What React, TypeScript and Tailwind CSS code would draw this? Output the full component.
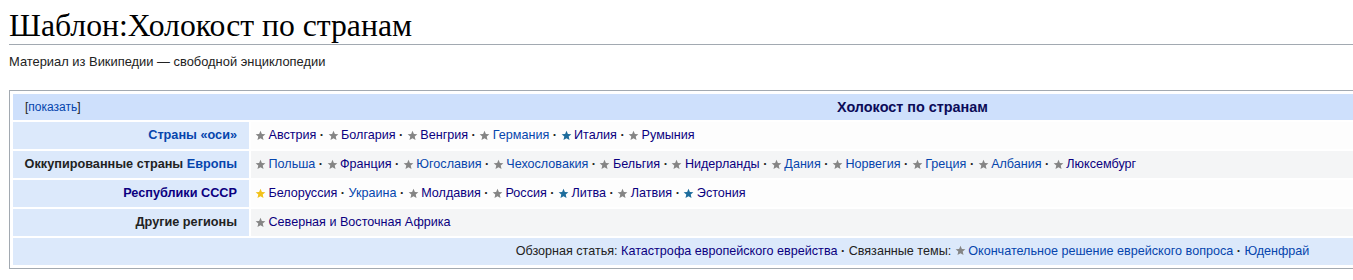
import React from 'react';

type StarKind = 'gray' | 'blue' | 'yellow' | null;

interface Item {
  text: string;
  star: StarKind;
  visited: boolean;
}

const starColor: Record<string, string> = {
  gray: '#858585',
  blue: '#1d6c9c',
  yellow: '#f2c21b',
};

const Star: React.FC<{ kind: string }> = ({ kind }) => (
  <svg className="inline-block w-[11px] h-[11px] align-[-1px] mr-[2.5px]" viewBox="0 0 24 24">
    <path
      fill={starColor[kind]}
      d="M12 1.5l3 7.2 7.6.6-5.8 5 1.8 7.5L12 17.8l-6.6 4 1.8-7.5-5.8-5 7.6-.6z"
    />
  </svg>
);

const Link: React.FC<{ visited?: boolean; children: React.ReactNode }> = ({ visited, children }) => (
  <a className={visited ? 'text-[#0b0080]' : 'text-[#0645ad]'}>{children}</a>
);

const Dot = () => <b className="font-bold"> · </b>;

const rows: { group: React.ReactNode; items: Item[]; bg: string }[] = [
  {
    group: <Link>Страны «оси»</Link>,
    bg: 'bg-[#fdfdfd]',
    items: [
      { text: 'Австрия', star: 'gray', visited: true },
      { text: 'Болгария', star: 'gray', visited: true },
      { text: 'Венгрия', star: 'gray', visited: true },
      { text: 'Германия', star: 'gray', visited: false },
      { text: 'Италия', star: 'blue', visited: true },
      { text: 'Румыния', star: 'gray', visited: true },
    ],
  },
  {
    group: (
      <>
        Оккупированные страны <Link>Европы</Link>
      </>
    ),
    bg: 'bg-[#f4f5f6]',
    items: [
      { text: 'Польша', star: 'gray', visited: false },
      { text: 'Франция', star: 'gray', visited: true },
      { text: 'Югославия', star: 'gray', visited: false },
      { text: 'Чехословакия', star: 'gray', visited: false },
      { text: 'Бельгия', star: 'gray', visited: true },
      { text: 'Нидерланды', star: 'gray', visited: true },
      { text: 'Дания', star: 'gray', visited: false },
      { text: 'Норвегия', star: 'gray', visited: false },
      { text: 'Греция', star: 'gray', visited: false },
      { text: 'Албания', star: 'gray', visited: false },
      { text: 'Люксембург', star: 'gray', visited: true },
    ],
  },
  {
    group: <Link visited>Республики СССР</Link>,
    bg: 'bg-[#fdfdfd]',
    items: [
      { text: 'Белоруссия', star: 'yellow', visited: true },
      { text: 'Украина', star: null, visited: false },
      { text: 'Молдавия', star: 'gray', visited: true },
      { text: 'Россия', star: 'gray', visited: true },
      { text: 'Литва', star: 'blue', visited: true },
      { text: 'Латвия', star: 'gray', visited: true },
      { text: 'Эстония', star: 'blue', visited: true },
    ],
  },
  {
    group: <>Другие регионы</>,
    bg: 'bg-[#f4f5f6]',
    items: [{ text: 'Северная и Восточная Африка', star: 'gray', visited: true }],
  },
];

export default function App() {
  return (
    <div className="w-[1353px] h-[280px] overflow-hidden bg-white text-[#222] font-['Liberation_Sans',Arial,sans-serif]">
      <div className="w-[1830px] pl-[9px]">
        {/* Heading */}
        <h1 className="font-['Liberation_Serif','Times_New_Roman',serif] text-[31.7px] leading-[36px] pt-[8px] border-b border-[#a2a9b1] text-black">
          Шаблон:Холокост по странам
        </h1>
        <div className="text-[12.9px] mt-[7px] h-[20px] leading-[20px]">
          Материал из Википедии — свободной энциклопедии
        </div>

        {/* Navbox */}
        <div className="mt-[18px] w-[1807px] border border-[#a2a9b1] p-[3px] text-[12.6px]">
          <div className="grid grid-cols-[236px_1fr] gap-[2px]">
            <div className="col-span-2 h-[26px] bg-[#cee0fc] flex items-center relative">
              <span className="absolute left-[12px] top-[4px] text-[12px]">
                [<Link>показать</Link>]
              </span>
              <div className="flex-1 text-center font-bold text-[14.4px] text-[#0b0b58] pt-[1px]">
                Холокост по странам
              </div>
            </div>

            {rows.map((row, i) => (
              <React.Fragment key={i}>
                <div className="h-[27px] bg-[#dce9fb] flex items-center justify-end pr-[12px] font-bold text-[12.7px]">
                  <span>{row.group}</span>
                </div>
                <div className={`h-[27px] ${row.bg} flex items-center pl-[4px] whitespace-pre`}>
                  {row.items.map((it, j) => (
                    <React.Fragment key={j}>
                      {j > 0 && <Dot />}
                      {it.star && <Star kind={it.star} />}
                      <Link visited={it.visited}>{it.text}</Link>
                    </React.Fragment>
                  ))}
                </div>
              </React.Fragment>
            ))}

            <div className="col-span-2 h-[27px] bg-[#dce9fb] flex items-center justify-center whitespace-pre">
              <span>
                Обзорная статья: <Link visited>Катастрофа европейского еврейства</Link>
                <Dot />
                Связанные темы: <Star kind="gray" />
                <Link>Окончательное решение еврейского вопроса</Link>
                <Dot />
                <Link>Юденфрай</Link>
              </span>
            </div>
          </div>
        </div>
      </div>
    </div>
  );
}
